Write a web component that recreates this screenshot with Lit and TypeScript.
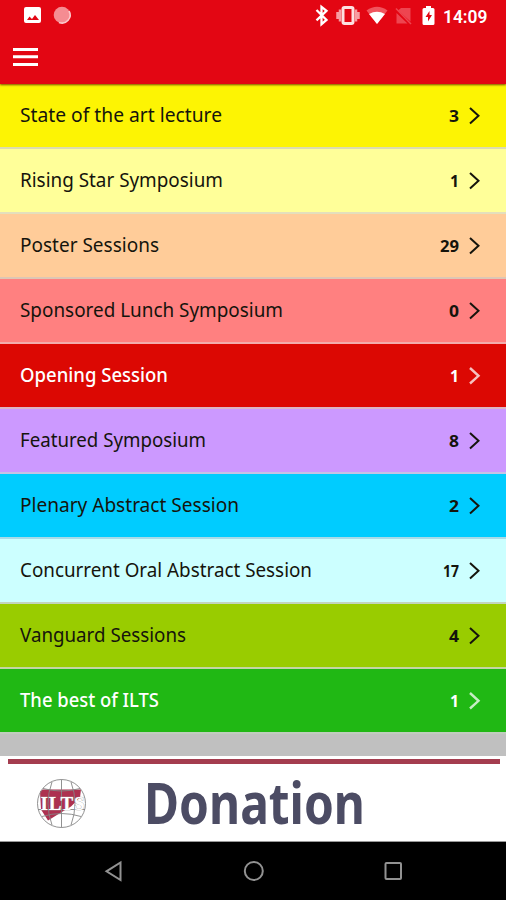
import { LitElement, html, svg, css } from "lit";
import { customElement } from "lit/decorators.js";
import { classMap } from "lit/directives/class-map.js";
import { styleMap } from "lit/directives/style-map.js";

interface Session {
  title: string;
  width: number;
  count: number;
  countWidth: number;
  color: string;
  rule: string;
  light?: boolean;
}

const sessions: Session[] = [
  { title: "State of the art lecture", width: 202, count: 3, countWidth: 10, color: "#fdf403", rule: "#dddcae" },
  { title: "Rising Star Symposium", width: 203, count: 1, countWidth: 9, color: "#ffff99", rule: "#e4dfbc" },
  { title: "Poster Sessions", width: 139, count: 29, countWidth: 19, color: "#ffcc99", rule: "#dec6b4" },
  { title: "Sponsored Lunch Symposium", width: 263, count: 0, countWidth: 10, color: "#ff8080", rule: "#f3adad" },
  { title: "Opening Session", width: 148, count: 1, countWidth: 9, color: "#dc0803", rule: "#deb4c4", light: true },
  { title: "Featured Symposium", width: 186, count: 8, countWidth: 10, color: "#cc99ff", rule: "#c6c2e6" },
  { title: "Plenary Abstract Session", width: 219, count: 2, countWidth: 10, color: "#00ccff", rule: "#a9dbe8" },
  { title: "Concurrent Oral Abstract Session", width: 292, count: 17, countWidth: 16, color: "#ccffff", rule: "#c2d5bd" },
  { title: "Vanguard Sessions", width: 166, count: 4, countWidth: 10, color: "#99cc00", rule: "#c4d5a4" },
  { title: "The best of ILTS", width: 139, count: 1, countWidth: 9, color: "#20b814", rule: "#c0cdbe", light: true },
];

@customElement("session-row")
class SessionRow extends LitElement {
  static properties = { session: { attribute: false } };
  declare session: Session;

  static styles = css`
    :host { display: block; }
    .row {
      box-sizing: border-box;
      height: 65px;
      padding: 0 25px 0 20px;
      border-bottom: 2px solid;
      display: flex;
      align-items: center;
      color: #15140c;
      font-family: "Noto Sans", "Open Sans", sans-serif;
    }
    .light { color: #fff; }
    svg { display: block; overflow: visible; fill: currentColor; }
    .title { flex: 1; height: 31px; font-size: 19.5px; }
    .light .title { font-weight: 500; }
    .count { width: 24px; height: 31px; font-size: 15.5px; font-weight: 700; }
    .arrow { width: 12px; height: 18px; margin-left: 10px; fill: none; stroke: currentColor; stroke-width: 2; }
    .light .arrow { opacity: 0.75; stroke-width: 2.4; }
  `;

  render() {
    const s = this.session;
    return html`<div
      class=${classMap({ row: true, light: !!s.light })}
      style=${styleMap({ backgroundColor: s.color, borderBottomColor: s.rule })}
    >
      <svg class="title"><text x="0" y="22" textLength=${s.width} lengthAdjust="spacingAndGlyphs">${s.title}</text></svg>
      <svg class="count"><text x=${24 - s.countWidth} y="22" textLength=${s.countWidth} lengthAdjust="spacingAndGlyphs">${s.count}</text></svg>
      <svg class="arrow" viewBox="0 0 12 18"><path d="M1 1 9.500 8.800 1 16.500" /></svg>
    </div>`;
  }
}

@customElement("app-root")
export class AppRoot extends LitElement {
  static styles = css`
    :host { display: block; width: 506px; height: 900px; overflow: hidden; background: #c0c0c0; }
    .screen { display: flex; flex-direction: column; height: 900px; }
    svg { display: block; }
    .header { height: 84px; background: #e30613; flex: none; box-shadow: 0 1px 2px #7a4a00; position: relative; }
    .list { flex: 1; background: #c0c0c0; }
    .banner { height: 86px; box-sizing: border-box; background: #fff; border-bottom: 1px solid #999; padding: 3px 6px 0 8px; flex: none; }
    .stripe { height: 5px; background: #a43d4f; }
    .promo { display: flex; }
    .logo { margin: 14px 0 0 28px; }
    .word { margin-left: 56px; overflow: visible; }
    .nav { height: 58px; background: #000; flex: none; }
  `;

  private header() {
    return svg`
      <path fill="#fff" fill-rule="evenodd" d="M26 7h13q2 0 2 2v12q0 2-2 2H26q-2 0-2-2V9q0-2 2-2ZM27 20h12l-4-5-3 4-2.500-2.500Z"/>
      <circle cx="62" cy="15" r="8.300" fill="#f58c92"/>
      <path d="M69 11a8 8 0 0 1-10 11.400" fill="none" stroke="#fbc9cb" stroke-width="1.600"/>
      <path fill="none" stroke="#fff" stroke-width="2.300" d="m316.500 10 10 10-5 4.200V6.800l5 4-10 9.500"/>
      <rect x="343" y="7.500" width="10" height="16" rx="1.500" fill="none" stroke="#fde0e1" stroke-width="3"/>
      <path stroke="#f79ca2" stroke-width="2.500" d="M340 9.500v12M356 9.500v12M337.500 12v7M358.500 12v7"/>
      <path fill="#f0555e" d="M366.500 10.500q10.500-7.500 21 0L377 24Z"/>
      <path fill="#fff" d="M369 14q8-4.500 16 0L377 24Z"/>
      <path fill="#ee4550" d="m401 8 9.500 0v13.500L398 10.500Zm-4.500 5L407.500 23.500H396.500Z"/>
      <path stroke="#ee4550" stroke-width="1.500" d="m396 8.500 15 15.500"/>
      <path fill="#fff" d="M426 6h5v2h2q1.500 0 1.500 1.500v14q0 1.500-1.500 1.500h-9q-1.500 0-1.500-1.500v-14Q422.500 8 424 8h2Z"/>
      <path fill="#e30613" d="m429.500 11-4 6h2.500v4.500l4-6.500h-2.500Z"/>
      <text x="443" y="22.500" font-family="Roboto, sans-serif" font-size="18.500" font-weight="600" fill="#fff" textLength="44.500" lengthAdjust="spacingAndGlyphs">14:09</text>
      <path fill="#fff" d="M13 48h25v3H13zM13 55.300h25v3H13zM13 63h25v3H13z"/>`;
  }

  render() {
    return html`<div class="screen">
      <div class="header"><svg width="506" height="84">${this.header()}</svg></div>
      <div class="list">
        ${sessions.map((s) => html`<session-row .session=${s}></session-row>`)}
      </div>
      <div class="banner">
        <div class="stripe"></div>
        <div class="promo">
          <svg class="logo" width="52" height="52" viewBox="0 0 52 52">
            <path d="M4 13.500 7 11.500h38l-1 8-9 9-10 6-13 8-7-11Z" fill="#ad3150"/>
            <g fill="none" stroke="#858585" stroke-width="0.900">
              <circle cx="25.500" cy="25.500" r="24"/>
              <path d="M25.500 1.500v48M16 4q-8 21.500 0 43M35 4q8 21.500 0 43M7 10.500q18.500 5 37 0M6 38.500q19.500-6 39 0M2 31.500h47"/>
            </g>
            <text x="4.500" y="32" textLength="44" lengthAdjust="spacing" font-family="Liberation Serif, serif" font-size="19" font-weight="700" fill="#fff" stroke="#aaa" stroke-width="0.700" paint-order="stroke">ILTS</text>
          </svg>
          <svg class="word" width="222" height="70">
            <text x="0" y="60" textLength="221" lengthAdjust="spacingAndGlyphs" font-family="Noto Sans, sans-serif" font-size="57" font-weight="700" fill="#4c4c64">Donation</text>
          </svg>
        </div>
      </div>
      <svg class="nav" width="506" height="58" fill="none" stroke="#929292" stroke-width="2">
        <path d="M120.500 20.500v17.500L106.500 29.300Z"/>
        <circle cx="253.800" cy="29" r="9"/>
        <rect x="385.500" y="21" width="15.500" height="16" rx="1"/>
      </svg>
    </div>`;
  }
}
